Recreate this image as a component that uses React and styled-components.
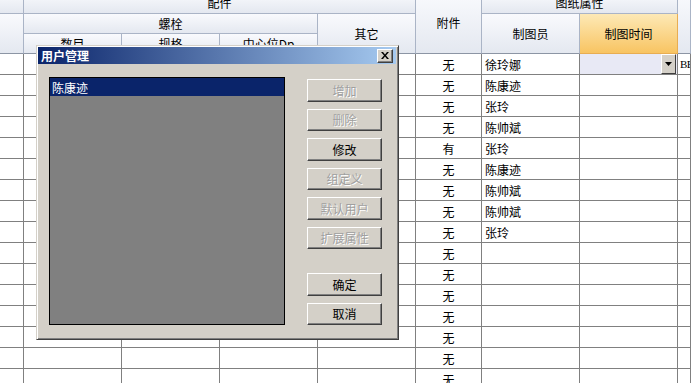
import React from 'react'
import styled, { createGlobalStyle } from 'styled-components'

const GlobalStyle = createGlobalStyle`
  html, body {
    margin: 0;
    padding: 0;
    background: #ffffff;
    overflow: hidden;
  }
  body {
    font-family: "Noto Sans CJK SC", "DejaVu Sans", sans-serif;
    font-size: 12px;
    color: #000;
  }
`

const COLS = '24px 98px 98px 98px 98px 66px 98px 98px 1fr'

const Page = styled.div`
  position: relative;
  width: 691px;
  height: 383px;
  overflow: hidden;
`

const Sheet = styled.div`
  margin-top: -7px;
`

const Header = styled.div`
  display: grid;
  grid-template-columns: ${COLS};
  grid-template-rows: 21px 20px 20px;
`

const HeadCell = styled.div`
  box-sizing: border-box;
  grid-column: ${p => p.col};
  grid-row: ${p => p.row};
  display: flex;
  align-items: center;
  justify-content: center;
  border-right: 1px solid #aab4c6;
  border-bottom: 1px solid ${p => (p.last ? '#8c95a4' : '#aab4c6')};
  background: linear-gradient(#f9fafd, #e4e8f0);
  font-size: 12px;
  line-height: 1;
  white-space: nowrap;
  overflow: hidden;
`

const ActiveHead = styled(HeadCell)`
  background: linear-gradient(#fde9b6, #f8c462);
  border-right-color: #e8ad52;
  border-bottom-color: #e8ad52;
`

const Row = styled.div`
  display: grid;
  grid-template-columns: ${COLS};
  height: 21px;
`

const Cell = styled.div`
  box-sizing: border-box;
  display: flex;
  align-items: center;
  justify-content: ${p => (p.center ? 'center' : 'flex-start')};
  padding-left: ${p => (p.center ? 0 : p.tight ? 2 : 3)}px;
  border-right: 1px solid #808080;
  border-bottom: 1px solid #808080;
  background: ${p => p.bg || '#fff'};
  white-space: nowrap;
  overflow: hidden;
  position: relative;
`

const SerifText = styled.span`
  font-family: "Liberation Serif", serif;
  font-size: 11px;
  letter-spacing: -0.5px;
`

const DropButton = styled.div`
  position: absolute;
  right: 1px;
  top: 0;
  bottom: 0;
  width: 15px;
  box-sizing: border-box;
  background: #d4d0c8;
  border-top: 1px solid #fff;
  border-left: 1px solid #fff;
  border-right: 1px solid #404040;
  border-bottom: 1px solid #404040;
  display: flex;
  align-items: center;
  justify-content: center;
`

const Dialog = styled.div`
  position: absolute;
  left: 36px;
  top: 45px;
  width: 363px;
  height: 295px;
  box-sizing: border-box;
  background: #d4d0c8;
  border-top: 1px solid #d4d0c8;
  border-left: 1px solid #d4d0c8;
  border-right: 1px solid #404040;
  border-bottom: 1px solid #404040;
  box-shadow: inset 1px 1px 0 #fff, inset -1px -1px 0 #808080;
  padding: 1px 2px 2px 1px;
  display: flex;
  flex-direction: column;
`

const TitleBar = styled.div`
  height: 19px;
  display: flex;
  align-items: center;
  justify-content: space-between;
  padding: 0 3px 0 3px;
  background: linear-gradient(90deg, #0a246a, #a6caf0);
  color: #fff;
  font-weight: bold;
  font-size: 12px;
`

const CloseButton = styled.div`
  width: 16px;
  height: 14px;
  box-sizing: border-box;
  background: #d4d0c8;
  border-top: 1px solid #fff;
  border-left: 1px solid #fff;
  border-right: 1px solid #404040;
  border-bottom: 1px solid #404040;
  box-shadow: inset -1px -1px 0 #808080;
  display: flex;
  align-items: center;
  justify-content: center;
`

const Body = styled.div`
  flex: 1;
  display: flex;
  gap: 22px;
  padding: 13px 12px 13px 11px;
`

const ListBox = styled.div`
  width: 236px;
  box-sizing: border-box;
  border: 1px solid #000;
  background: #808080;
  display: flex;
  flex-direction: column;
`

const ListItem = styled.div`
  height: 18px;
  display: flex;
  align-items: center;
  padding-left: 2px;
  background: ${p => (p.selected ? '#0a246a' : 'transparent')};
  color: ${p => (p.selected ? '#fff' : '#000')};
  font-size: 12px;
`

const ButtonColumn = styled.div`
  display: flex;
  flex-direction: column;
  gap: 7px;
  padding-top: 2px;
`

const Spacer = styled.div`
  height: 10px;
`

const Button = styled.div`
  width: 75px;
  height: 22.5px;
  box-sizing: border-box;
  background: #d4d0c8;
  border-top: 1px solid #fff;
  border-left: 1px solid #fff;
  border-right: 1px solid #404040;
  border-bottom: 1px solid #404040;
  box-shadow: inset -1px -1px 0 #808080;
  display: flex;
  align-items: center;
  justify-content: center;
  font-size: 12px;
  color: ${p => (p.disabled ? '#a0a0a0' : '#000')};
  text-shadow: ${p => (p.disabled ? '1px 1px 0 #fff' : 'none')};
`

const drafters = ['徐玲娜', '陈康迹', '张玲', '陈帅斌', '张玲', '陈康迹', '陈帅斌', '陈帅斌', '张玲']

const rows = Array.from({ length: 16 }, (_, i) => ({
  attach: i === 4 ? '有' : '无',
  drafter: drafters[i] || '',
}))

const buttons = [
  { label: '增加', disabled: true },
  { label: '删除', disabled: true },
  { label: '修改', disabled: false },
  { label: '组定义', disabled: true },
  { label: '默认用户', disabled: true },
  { label: '扩展属性', disabled: true },
]

const DownArrow = () => (
  <svg width="7" height="4" viewBox="0 0 7 4">
    <path d="M0 0h7L3.5 4z" fill="#000" />
  </svg>
)

const CloseGlyph = () => (
  <svg width="8" height="7" viewBox="0 0 8 7">
    <path d="M0 0h2l2 2.5L6 0h2L5 3.5 8 7H6L4 4.5 2 7H0l3-3.5z" fill="#000" />
  </svg>
)

export default function App() {
  return (
    <Page>
      <GlobalStyle />
      <Sheet>
        <Header>
          <HeadCell col="1" row="1" />
          <HeadCell col="1" row="2 / 4" last />
          <HeadCell col="2 / 6" row="1">配件</HeadCell>
          <HeadCell col="2 / 5" row="2">螺栓</HeadCell>
          <HeadCell col="5" row="2 / 4" last>其它</HeadCell>
          <HeadCell col="2" row="3" last>数目</HeadCell>
          <HeadCell col="3" row="3" last>规格</HeadCell>
          <HeadCell col="4" row="3" last>中心位Dp</HeadCell>
          <HeadCell col="6" row="1 / 4" last>附件</HeadCell>
          <HeadCell col="7 / 9" row="1">图纸属性</HeadCell>
          <HeadCell col="7" row="2 / 4" last>制图员</HeadCell>
          <ActiveHead col="8" row="2 / 4">制图时间</ActiveHead>
          <HeadCell col="9" row="1 / 4" last />
        </Header>
        {rows.map((r, i) => (
          <Row key={i}>
            <Cell />
            <Cell />
            <Cell />
            <Cell />
            <Cell />
            <Cell center>{r.attach}</Cell>
            <Cell>{r.drafter}</Cell>
            <Cell bg={i === 0 ? '#e8e9f5' : '#fff'}>
              {i === 0 && (
                <DropButton>
                  <DownArrow />
                </DropButton>
              )}
            </Cell>
            <Cell tight>{i === 0 && <SerifText>BE</SerifText>}</Cell>
          </Row>
        ))}
      </Sheet>

      <Dialog>
        <TitleBar>
          <span>用户管理</span>
          <CloseButton>
            <CloseGlyph />
          </CloseButton>
        </TitleBar>
        <Body>
          <ListBox>
            <ListItem selected>陈康迹</ListItem>
          </ListBox>
          <ButtonColumn>
            {buttons.map(b => (
              <Button key={b.label} disabled={b.disabled}>{b.label}</Button>
            ))}
            <Spacer />
            <Button>确定</Button>
            <Button>取消</Button>
          </ButtonColumn>
        </Body>
      </Dialog>
    </Page>
  )
}
